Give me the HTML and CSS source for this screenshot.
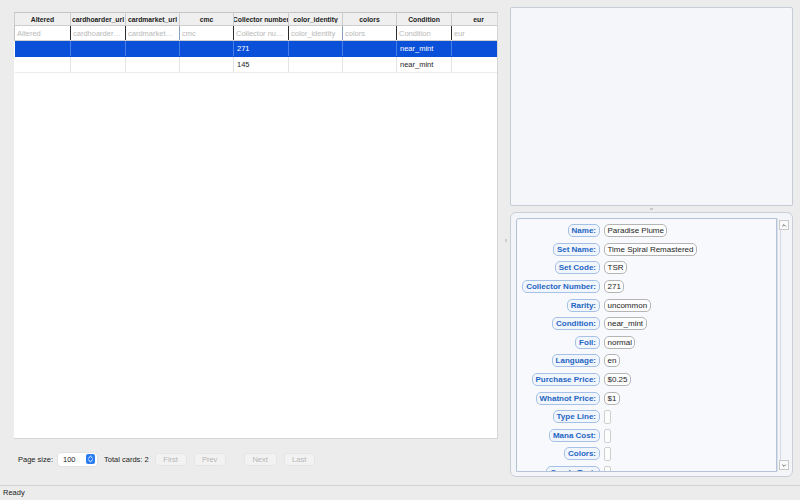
FILE: index.html
```html
<!DOCTYPE html>
<html>
<head>
<meta charset="utf-8">
<link rel="stylesheet" href="styles.css">
</head>
<body>
<div class="app">
  <div class="main">
    <div class="left">
      <div class="table-box">
        <table class="grid">
          <colgroup>
            <col class="c-a"><col class="c-b"><col class="c-c"><col class="c-c"><col class="c-b"><col class="c-c"><col class="c-c"><col class="c-b"><col class="c-c">
          </colgroup>
          <thead>
            <tr class="head">
              <th><div class="hd">Altered</div></th>
              <th><div class="hd">cardhoarder_url</div></th>
              <th><div class="hd">cardmarket_url</div></th>
              <th><div class="hd">cmc</div></th>
              <th><div class="hd">Collector number</div></th>
              <th><div class="hd">color_identity</div></th>
              <th><div class="hd">colors</div></th>
              <th><div class="hd">Condition</div></th>
              <th><div class="hd">eur</div></th>
            </tr>
          </thead>
          <tbody>
            <tr class="filters">
              <td class="first"><div class="ph">Altered</div></td>
              <td><div class="ph">cardhoarder_url</div></td>
              <td><div class="ph">cardmarket_url</div></td>
              <td class="soft"><div class="ph">cmc</div></td>
              <td><div class="ph">Collector number</div></td>
              <td><div class="ph">color_identity</div></td>
              <td class="soft"><div class="ph">colors</div></td>
              <td><div class="ph">Condition</div></td>
              <td><div class="ph">eur</div></td>
            </tr>
            <tr class="row selected">
              <td></td><td></td><td></td><td></td><td>271</td><td></td><td></td><td>near_mint</td><td></td>
            </tr>
            <tr class="row">
              <td></td><td></td><td></td><td></td><td>145</td><td></td><td></td><td>near_mint</td><td></td>
            </tr>
          </tbody>
        </table>
      </div>
      <div class="pager">
        <span class="lbl">Page size:</span>
        <div class="spin">
          <span class="spin-val">100</span>
          <svg class="stepper" width="9" height="10" viewBox="0 0 9 10">
            <rect x="0" y="0" width="9" height="10" rx="2" fill="#2a7cf0"/>
            <path d="M2.6 4 L4.5 2.2 L6.4 4" fill="none" stroke="#fff" stroke-width="1" stroke-linecap="round" stroke-linejoin="round"/>
            <path d="M2.6 6 L4.5 7.8 L6.4 6" fill="none" stroke="#fff" stroke-width="1" stroke-linecap="round" stroke-linejoin="round"/>
          </svg>
        </div>
        <span class="lbl total">Total cards: 2</span>
        <span class="btn b-first">First</span>
        <span class="btn b-prev">Prev</span>
        <span class="btn b-next">Next</span>
        <span class="btn b-last">Last</span>
      </div>
    </div>
    <div class="vsplit"><span class="dot"></span></div>
    <div class="right">
      <div class="preview"></div>
      <div class="hsplit"><span class="dot"></span></div>
      <div class="details-outer">
        <div class="details">
          <div class="fields">
            <span class="k">Name:</span><span class="v">Paradise Plume</span>
            <span class="k">Set Name:</span><span class="v">Time Spiral Remastered</span>
            <span class="k">Set Code:</span><span class="v">TSR</span>
            <span class="k">Collector Number:</span><span class="v">271</span>
            <span class="k">Rarity:</span><span class="v">uncommon</span>
            <span class="k">Condition:</span><span class="v">near_mint</span>
            <span class="k">Foil:</span><span class="v">normal</span>
            <span class="k">Language:</span><span class="v">en</span>
            <span class="k">Purchase Price:</span><span class="v">$0.25</span>
            <span class="k">Whatnot Price:</span><span class="v">$1</span>
            <span class="k">Type Line:</span><span class="v empty"></span>
            <span class="k">Mana Cost:</span><span class="v empty"></span>
            <span class="k">Colors:</span><span class="v empty"></span>
            <span class="k">Oracle Text:</span><span class="v empty"></span>
          </div>
        </div>
        <div class="scrollbar">
          <span class="sbtn">
            <svg width="9" height="9" viewBox="0 0 9 9"><path d="M2.5 5.5 L4.5 3.5 L6.5 5.5" fill="none" stroke="#555" stroke-width="1"/></svg>
          </span>
          <span class="track"></span>
          <span class="sbtn">
            <svg width="9" height="9" viewBox="0 0 9 9"><path d="M2.5 3.5 L4.5 5.5 L6.5 3.5" fill="none" stroke="#555" stroke-width="1"/></svg>
          </span>
        </div>
      </div>
    </div>
  </div>
  <div class="status">Ready</div>
</div>
</body>
</html>
```

FILE: styles.css
```css
* { box-sizing: border-box; }
html, body { margin: 0; padding: 0; }
body {
  background: #ececec;
  font-family: "Liberation Sans", Arial, sans-serif;
  color: #1e1e1e;
}
.app {
  width: 800px;
  height: 500px;
  display: flex;
  flex-direction: column;
  overflow: hidden;
}
.main {
  height: 485px;
  display: flex;
}
.left {
  width: 498px;
  padding: 12px 0 0 14px;
  display: flex;
  flex-direction: column;
}
.table-box {
  width: 484px;
  height: 427px;
  background: #fff;
  border: 1px solid #d6d6d6;
  border-top: none;
  border-left: none;
  overflow: hidden;
}
.grid {
  border-collapse: collapse;
  table-layout: fixed;
  width: 491px;
  font-size: 7.5px;
}
.c-a { width: 56px; }
.c-b { width: 55px; }
.c-c { width: 54px; }
.head th {
  height: 13px;
  padding: 0;
  background: #efefef;
  font-weight: bold;
  font-size: 6.8px;
  color: #222;
  border: 1px solid #cdcdcd;
  border-top-color: #c4c4c4;
}
.hd {
  display: flex;
  justify-content: center;
  overflow: hidden;
  white-space: nowrap;
}
.filters td {
  height: 15px;
  padding: 0;
  border-bottom: 1px solid #cfcfcf;
  border-left: 1.5px solid #2e2e2e;
  border-top: 1px solid #d0d0d0;
  overflow: hidden;
}
.filters td.first { border-left: 1px solid #c2c2c2; }
.filters td.soft { border-left: 1px solid #8aa0c0; }
.ph {
  padding: 0 2px;
  color: #b8b8b8;
  font-size: 7.5px;
  white-space: nowrap;
  overflow: hidden;
  text-overflow: ellipsis;
  line-height: 13px;
}
.row td {
  height: 16px;
  padding: 0 3px;
  border-right: 1px solid #e4e4e4;
  border-bottom: 1px solid #ececec;
  white-space: nowrap;
  overflow: hidden;
  color: #1e1e1e;
}
.row.selected td {
  background: #0b50d8;
  color: #fff;
  border-right-color: #4a7ee6;
  border-bottom-color: #0b50d8;
}
.pager {
  margin-top: 14px;
  height: 12px;
  display: flex;
  align-items: center;
  padding-left: 4px;
  font-size: 7.5px;
}
.lbl { color: #222; white-space: nowrap; }
.spin {
  margin-left: 5px;
  width: 39px;
  height: 13px;
  background: #fff;
  border-radius: 3px;
  display: flex;
  align-items: center;
  justify-content: space-between;
  padding: 0 2px 0 5px;
  box-shadow: 0 0 0 0.5px #d8d8d8;
}
.spin-val { color: #222; }
.stepper { display: block; }
.total { margin-left: 7px; }
.btn {
  height: 11px;
  width: 30px;
  display: flex;
  align-items: center;
  justify-content: center;
  background: #f2f2f2;
  color: #b6b6b6;
  border-radius: 2px;
  box-shadow: 0 0 0 0.5px #e0e0e0;
}
.b-first { margin-left: 7px; }
.b-prev { margin-left: 9px; }
.b-next { margin-left: 20px; width: 31px; }
.b-last { margin-left: 9px; width: 29px; }
.vsplit {
  width: 12px;
  position: relative;
}
.vsplit .dot {
  position: absolute;
  left: 7px;
  top: 239px;
  width: 2px;
  height: 3px;
  background: #cfcfcf;
}
.right {
  width: 283px;
  padding-top: 7px;
  display: flex;
  flex-direction: column;
}
.preview {
  height: 199px;
  background: #f4f6fa;
  border: 1px solid #c6ccd6;
  border-radius: 2px;
}
.hsplit {
  height: 6px;
  position: relative;
}
.hsplit .dot {
  position: absolute;
  left: 140px;
  top: 2px;
  width: 3px;
  height: 2px;
  background: #c8c8c8;
}
.details-outer {
  height: 265px;
  border: 1px solid #c9ced8;
  border-radius: 6px;
  background: #f3f5f9;
  padding: 5px 3px 4px 5px;
  display: flex;
}
.details {
  width: 262px;
  height: 254px;
  background: #f8f9fc;
  border: 1px solid #b4c2d8;
  border-radius: 3px 0 0 0;
  overflow: hidden;
}
.fields {
  display: grid;
  grid-template-columns: 83px auto;
  column-gap: 4px;
  grid-auto-rows: 13px;
  row-gap: 5.6px;
  padding-top: 5.3px;
  justify-items: start;
}
.k {
  justify-self: end;
  height: 13px;
  padding: 0 3px;
  border: 1px solid #a7c1e6;
  background: #f1f5fc;
  border-radius: 5px;
  color: #1f66c4;
  font-weight: bold;
  font-size: 8px;
  line-height: 11px;
  white-space: nowrap;
}
.v {
  height: 13px;
  padding: 0 2.5px;
  border: 1px solid #b5b5b5;
  background: #fdfdfd;
  border-radius: 5px;
  color: #1e1e1e;
  font-size: 8px;
  line-height: 11px;
  white-space: nowrap;
}
.v.empty {
  width: 7px;
  height: 14px;
  padding: 0;
  border-radius: 2px;
  border-color: #cfcfcf;
}
.scrollbar {
  width: 12px;
  height: 254px;
  display: flex;
  flex-direction: column;
  padding: 2px 0 2px 1px;
  border-left: 1px solid #dbe1ea;
}
.sbtn {
  width: 10px;
  height: 10px;
  border: 1px solid #c8c8c8;
  background: #fafafa;
  display: flex;
  align-items: center;
  justify-content: center;
}
.sbtn svg { display: block; }
.track {
  flex: 1;
  margin-left: 1px;
  border-left: 1px solid #d3dae4;
}
.status {
  height: 15px;
  border-top: 1px solid #d4d4d4;
  padding-left: 3px;
  font-size: 7.5px;
  line-height: 14px;
  color: #222;
}
```
